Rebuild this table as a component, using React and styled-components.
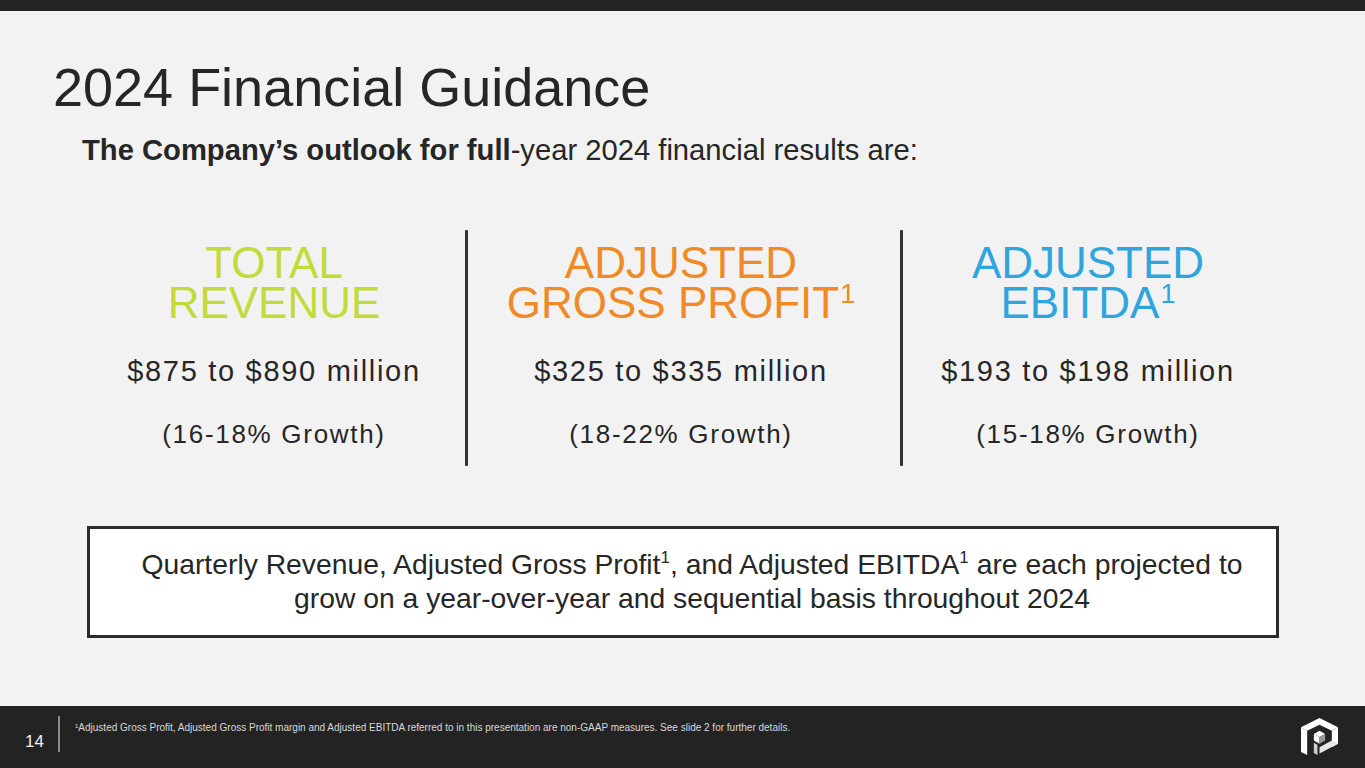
import React from 'react';
import styled, { createGlobalStyle } from 'styled-components';

const GlobalStyle = createGlobalStyle`
    html, body {
        margin: 0;
        padding: 0;
        background: #f2f2f2;
    }
    * {
        box-sizing: border-box;
    }
`;

const StyledSlide = styled.div`
    width: 1365px;
    height: 768px;
    display: flex;
    flex-direction: column;
    background: #f2f2f2;
    font-family: "Liberation Sans", Arial, sans-serif;
    color: #262626;
    overflow: hidden;
`;
const StyledTopBar = styled.div`
    height: 11px;
    background: #232323;
    flex-shrink: 0;
`;
const StyledMain = styled.div`
    flex: 1;
    display: flex;
    flex-direction: column;
    padding: 49px 0 0 53px;
`;
const StyledTitle = styled.h1`
    margin: 0;
    font-size: 54px;
    line-height: 54px;
    font-weight: normal;
    color: #262626;
`;
const StyledSubtitle = styled.div`
    margin: 22px 0 0 29px;
    font-size: 29.2px;
    line-height: 29px;
    b {
        font-weight: bold;
    }
`;
const StyledColumns = styled.div`
    display: grid;
    grid-template-columns: 382px 3px 432px 3px 370px;
    margin: 65px 0 0 30px;
    height: 236px;
`;
const StyledColumn = styled.div`
    display: flex;
    flex-direction: column;
    align-items: center;
    text-align: center;
    padding-top: 13px;
    padding-right: ${props => props.shift || 0}px;
`;
const StyledDivider = styled.div`
    background: #333333;
    border-radius: 1px;
`;
const StyledHeading = styled.div`
    font-size: 44px;
    line-height: 40px;
    color: ${props => props.color};
    sup {
        font-size: 27px;
        line-height: 0;
        vertical-align: 15px;
        margin-left: 1px;
    }
`;
const StyledValue = styled.div`
    margin-top: 34px;
    font-size: 29px;
    line-height: 29px;
    letter-spacing: 1.7px;
`;
const StyledGrowth = styled.div`
    margin-top: 35px;
    font-size: 26px;
    line-height: 26px;
    letter-spacing: 1.7px;
`;
const StyledNoteBox = styled.div`
    margin: 60px 0 0 34px;
    width: 1192px;
    height: 112px;
    border: 3px solid #2b2b2b;
    background: #ffffff;
    display: flex;
    align-items: center;
    justify-content: center;
    text-align: center;
    padding: 0 0 2px 18px;
    font-size: 28.3px;
    line-height: 34px;
    sup {
        font-size: 17px;
        line-height: 0;
        vertical-align: 11px;
    }
`;
const StyledFooter = styled.div`
    height: 62px;
    flex-shrink: 0;
    background: #232323;
    display: flex;
    align-items: flex-start;
    padding: 10px 27px 0 25px;
`;
const StyledPageNum = styled.div`
    width: 33px;
    padding-top: 17px;
    font-size: 17px;
    line-height: 17px;
    color: #f2f2f2;
`;
const StyledFooterDivider = styled.div`
    width: 2px;
    height: 36px;
    background: #8a8a8a;
    margin-right: 15px;
`;
const StyledFootnote = styled.div`
    flex: 1;
    padding-top: 6px;
    font-size: 10px;
    line-height: 11px;
    color: #d8d8d8;
    sup {
        font-size: 6px;
        line-height: 0;
        vertical-align: 3px;
    }
`;
const StyledLogo = styled.svg`
    width: 37px;
    height: 37px;
    margin-top: 2px;
`;

const columns = [
    { heading: ['TOTAL', 'REVENUE'], sup: false, color: '#c3da3b', value: '$875 to $890 million', growth: '(16-18% Growth)' },
    { heading: ['ADJUSTED', 'GROSS PROFIT'], sup: true, color: '#f08a27', value: '$325 to $335 million', growth: '(18-22% Growth)', shift: 6 },
    { heading: ['ADJUSTED', 'EBITDA'], sup: true, color: '#2fa5dd', value: '$193 to $198 million', growth: '(15-18% Growth)' },
];

const Logo = () => (
    <StyledLogo viewBox="0 0 36 36">
        {/* hexagon "P" mark */}
        <polygon points="0,9 18,0 36,9 30,12.5 18,6.5 6,12.5" fill="#ffffff" />
        <polygon points="0,9 6,12.5 6,36 0,33" fill="#ffffff" />
        <polygon points="36,9 36,25 30,28.5 30,12.5" fill="#ffffff" />
        <polygon points="36,25 18,34.5 18,28.5 30,22" fill="#e6e6e6" />
        <polygon points="12.5,15.5 18,12.5 23.5,15.5 18,18.5" fill="#ffffff" />
        <polygon points="12.5,15.5 18,18.5 18,25 12.5,22" fill="#ffffff" />
        <polygon points="18,18.5 23.5,15.5 23.5,22 18,25" fill="#9a9a9a" />
        <polygon points="12.5,24 16,26 16,36 12.5,34" fill="#d0d0d0" />
    </StyledLogo>
);

const App = () => {
    return (
        <StyledSlide>
            <GlobalStyle />
            <StyledTopBar />
            <StyledMain>
                <StyledTitle>2024 Financial Guidance</StyledTitle>
                <StyledSubtitle>
                    <b>The Company’s outlook for full</b>-year 2024 financial results are:
                </StyledSubtitle>
                <StyledColumns>
                    {columns.map((col, i) => (
                        <React.Fragment key={col.value}>
                            {i > 0 && <StyledDivider />}
                            <StyledColumn shift={col.shift}>
                                <StyledHeading color={col.color}>
                                    {col.heading[0]}<br />
                                    {col.heading[1]}{col.sup && <sup>1</sup>}
                                </StyledHeading>
                                <StyledValue>{col.value}</StyledValue>
                                <StyledGrowth>{col.growth}</StyledGrowth>
                            </StyledColumn>
                        </React.Fragment>
                    ))}
                </StyledColumns>
                <StyledNoteBox>
                    <div>
                        Quarterly Revenue, Adjusted Gross Profit<sup>1</sup>, and Adjusted EBITDA<sup>1</sup> are each projected to<br />
                        grow on a year-over-year and sequential basis throughout 2024
                    </div>
                </StyledNoteBox>
            </StyledMain>
            <StyledFooter>
                <StyledPageNum>14</StyledPageNum>
                <StyledFooterDivider />
                <StyledFootnote>
                    <sup>1</sup>Adjusted Gross Profit, Adjusted Gross Profit margin and Adjusted EBITDA referred to in this presentation are non-GAAP measures. See slide 2 for further details.
                </StyledFootnote>
                <Logo />
            </StyledFooter>
        </StyledSlide>
    );
};

export default App;
